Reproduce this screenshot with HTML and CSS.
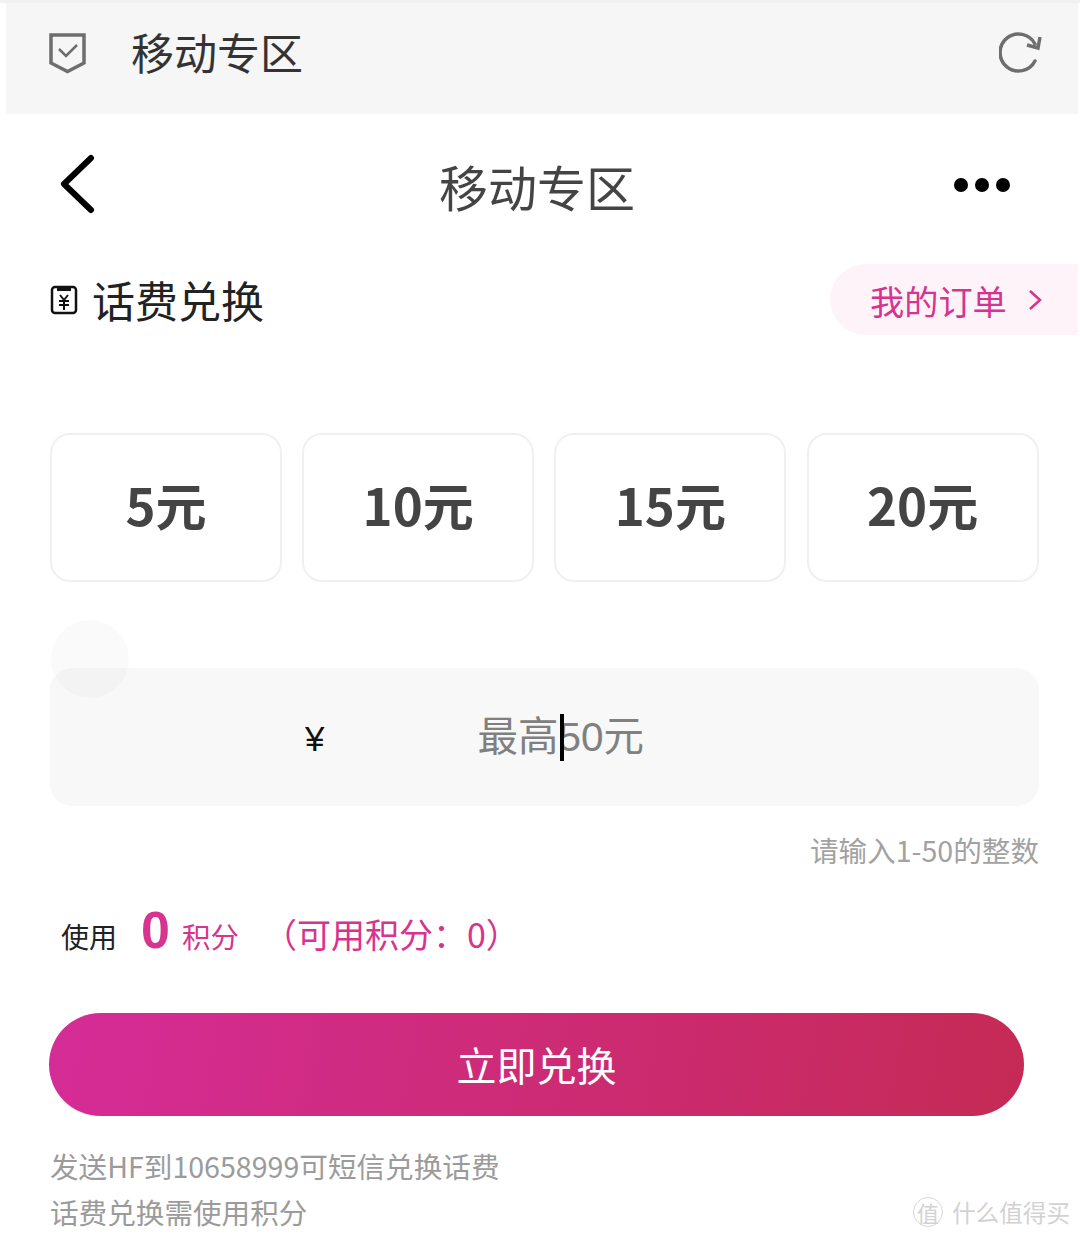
FILE: index.html
```html
<!DOCTYPE html>
<html lang="zh-CN">
  <head>
    <meta http-equiv="content-type" content="text/html; charset=UTF-8" />
    <title>移动专区</title>
    <link rel="stylesheet" href="styles.css">
  </head>

  <body>
    <div class="browserBar">
      <svg class="shieldIcon" width="38" height="42" viewBox="0 0 38 42">
        <path d="M2 3H35V31L18.500 39.500L2 31Z" fill="none" stroke="#6e6e6e" stroke-width="3.500" />
        <path d="M10 17L17 24L28 13" fill="none" stroke="#6e6e6e" stroke-width="2.500" />
      </svg>
      <span class="browserTitle">移动专区</span>
      <svg class="reloadIcon" width="44" height="44" viewBox="0 0 44 44">
        <path d="M36 30A18.500 18.500 0 1 1 36 13" fill="none" stroke="#6e6e6e" stroke-width="3.500" stroke-linecap="round" />
        <path d="M41 6L39 17L28 14" fill="none" stroke="#6e6e6e" stroke-width="3.500" />
      </svg>
    </div>

    <div class="navBar">
      <svg class="backIcon" width="36" height="62" viewBox="0 0 36 62">
        <path d="M31 4L4 30L31 56" fill="none" stroke="#000" stroke-width="6" stroke-linecap="round" stroke-linejoin="round" />
      </svg>
      <span class="navTitle">移动专区</span>
      <div class="moreDots"><i></i><i></i><i></i></div>
    </div>

    <div class="sectionRow">
      <div class="sectionName">
        <svg width="28" height="30" viewBox="0 0 28 30">
          <rect x="2" y="2" width="24" height="26" rx="3" fill="none" stroke="#111" stroke-width="2.500" />
          <path d="M8 3H20V5H8Z" fill="#111" stroke="#111" stroke-width="2" />
          <path d="M10 10L14 15L18 10M9 16H19M9 20H19M14 15V25" fill="none" stroke="#111" stroke-width="2" />
        </svg>
        <span>话费兑换</span>
      </div>
      <div class="orderPill">
        <span>我的订单</span>
        <svg width="14" height="22" viewBox="0 0 14 22">
          <path d="M2 2L12 11L2 20" fill="none" stroke="#d6348e" stroke-width="2.500" />
        </svg>
      </div>
    </div>

    <div class="amountGrid">
      <div class="amountCard">5元</div>
      <div class="amountCard">10元</div>
      <div class="amountCard">15元</div>
      <div class="amountCard">20元</div>
    </div>

    <div class="inputBox">
      <div class="touchDot"></div>
      <span class="yen">¥</span>
      <span class="placeholder">最高<i class="caret"></i>50元</span>
    </div>

    <div class="hint">请输入1-50的整数</div>

    <div class="pointsRow">
      <span class="useLabel">使用</span>
      <span class="pointsNum">0</span>
      <span class="pointsUnit">积分</span>
      <span class="pointsLeft">（可用积分：0）</span>
    </div>

    <div class="submitBtn">立即兑换</div>

    <div class="notes">
      <p>发送HF到10658999可短信兑换话费</p>
      <p>话费兑换需使用积分</p>
    </div>

    <div class="watermark">
      <span class="markBadge">值</span>
      <span>什么值得买</span>
    </div>
  </body>
</html>
```

FILE: styles.css
```css
* {
  box-sizing: border-box;
}
html,
body {
  margin: 0;
  padding: 0;
}
body {
  position: relative;
  width: 1080px;
  height: 1240px;
  overflow: hidden;
  background-color: #fff;
  font-family: "Noto Sans CJK SC", "Noto Sans", sans-serif;
  border-top: 3px solid #f1f1f1;
}
.browserBar {
  display: flex;
  align-items: center;
  height: 111px;
  margin: 0 2px 0 6px;
  padding: 0 35px 0 43px;
  background-color: #f6f6f6;
}
.shieldIcon {
  margin-bottom: 12px;
}
.browserTitle {
  margin: 0 0 14px 44px;
  font-size: 43px;
  line-height: 1;
  color: #333;
}
.reloadIcon {
  margin: 0 0 11px auto;
}
.navBar {
  display: flex;
  align-items: center;
  height: 150px;
  padding: 0 70px 0 60px;
}
.backIcon {
  margin-top: -8px;
}
.navTitle {
  margin: 0 auto 8px 343px;
  font-size: 49px;
  line-height: 1;
  color: #444;
}
.moreDots {
  display: flex;
  gap: 7px;
  margin-top: -8px;
}
.moreDots i {
  width: 14px;
  height: 14px;
  border-radius: 50%;
  background-color: #000;
}
.sectionRow {
  display: flex;
  align-items: center;
  justify-content: space-between;
  height: 71px;
  padding-left: 50px;
}
.sectionName {
  display: flex;
  align-items: center;
  gap: 14px;
  font-size: 43px;
  color: #222;
}
.sectionName span {
  margin-bottom: 2px;
}
.orderPill {
  display: flex;
  align-items: center;
  gap: 21px;
  width: 248px;
  height: 71px;
  margin-right: 2px;
  padding-left: 40px;
  border-radius: 36px 0 0 36px;
  background-color: #fdf3f8;
  font-size: 34.2px;
  color: #d6348e;
}
.amountGrid {
  display: grid;
  grid-template-columns: repeat(4, 232px);
  gap: 20.2px;
  margin: 98px 0 0 50px;
}
.amountCard {
  display: flex;
  align-items: center;
  justify-content: center;
  height: 149px;
  padding-bottom: 7px;
  border: 2px solid #f0f0f0;
  border-radius: 20px;
  font-size: 51px;
  font-weight: 700;
  color: #444;
}
.inputBox {
  position: relative;
  display: flex;
  align-items: center;
  width: 989px;
  height: 138px;
  margin: 86px 0 0 50px;
  border-radius: 22px;
  background-color: #f8f8f8;
}
.touchDot {
  position: absolute;
  left: 1px;
  top: -48px;
  width: 78px;
  height: 78px;
  border-radius: 50%;
  background-color: rgba(0, 0, 0, 0.02);
}
.yen {
  margin: 4px 0 0 255px;
  font-family: "Liberation Sans", sans-serif;
  font-size: 35px;
  color: #111;
}
.placeholder {
  position: relative;
  margin-left: 153px;
  font-family: "Liberation Sans", "Noto Sans CJK SC", sans-serif;
  font-size: 40.5px;
  line-height: 1;
  color: #808080;
}
.caret {
  position: absolute;
  left: 83px;
  top: -3px;
  width: 4px;
  height: 47px;
  background-color: #000;
}
.hint {
  margin: 24px 41px 0 0;
  font-size: 28.6px;
  line-height: 40px;
  text-align: right;
  color: #a2a2a2;
}
.pointsRow {
  display: flex;
  align-items: baseline;
  height: 60px;
  margin-top: 30px;
  padding-left: 61px;
  color: #d6348e;
}
.useLabel {
  font-size: 28px;
  color: #222;
}
.pointsNum {
  margin-left: 24px;
  font-family: "Liberation Sans", sans-serif;
  font-size: 52px;
  font-weight: 700;
}
.pointsUnit {
  margin-left: 12px;
  font-size: 28.5px;
}
.pointsLeft {
  margin-left: 24px;
  font-size: 34px;
}
.submitBtn {
  width: 975px;
  height: 103px;
  margin: 53px 0 0 49px;
  border-radius: 52px;
  background: linear-gradient(100deg, #d52c97, #c52a55);
  font-size: 40px;
  line-height: 103px;
  text-align: center;
  color: #fff;
}
.notes {
  margin: 27px 0 0 50px;
  font-size: 28.6px;
  line-height: 46px;
  color: #9b9b9b;
}
.notes p {
  margin: 0;
}
.watermark {
  position: absolute;
  right: 10px;
  top: 1190px;
  display: flex;
  align-items: center;
  gap: 9px;
  font-size: 23.6px;
  line-height: 38px;
  color: #d2d2d2;
}
.markBadge {
  width: 30px;
  height: 30px;
  border: 1px solid #d8d8d8;
  border-radius: 50%;
  font-size: 22px;
  line-height: 28px;
  text-align: center;
}
```
